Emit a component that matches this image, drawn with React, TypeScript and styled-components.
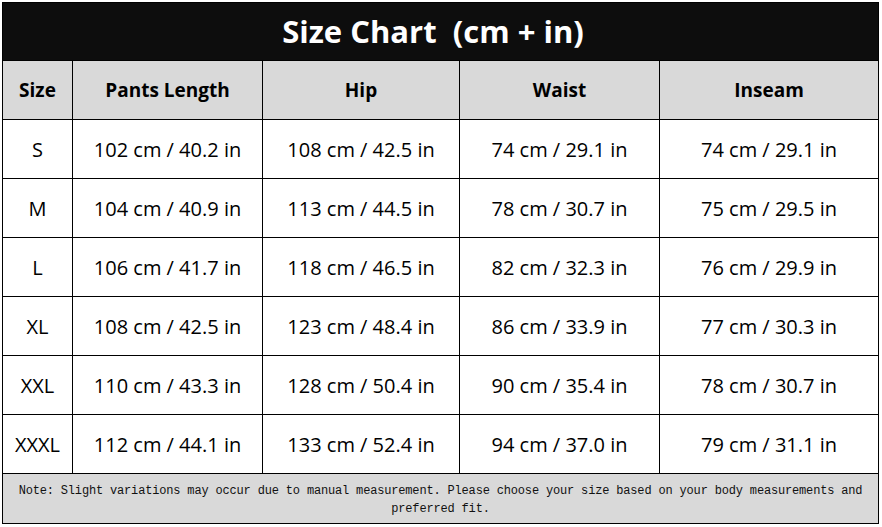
import React from "react";
import styled, { createGlobalStyle } from "styled-components";

const GlobalStyle = createGlobalStyle`
  html, body { margin: 0; padding: 0; background: #ffffff; }
  body { padding: 2px 0 0 2px; }
`;

const Grid = styled.div`
  display: grid;
  grid-template-columns: 69px 189px 196px 199px 218px;
  grid-template-rows: 57px 58px repeat(6, 58px) 49px;
  gap: 1px;
  padding: 1px;
  background: #000000;
  width: max-content;
  font-family: "Open Sans", "Noto Sans", sans-serif;
`;

const Title = styled.div`
  grid-column: 1 / -1;
  background: #0d0d0d;
  color: #ffffff;
  font-size: 31px;
  font-weight: 700;
  white-space: pre;
  display: flex;
  align-items: center;
  justify-content: center;
  padding: 0 15px 1px 0;
`;

const HeadCell = styled.div`
  background: #d9d9d9;
  color: #000000;
  font-size: 19px;
  font-weight: 700;
  display: flex;
  align-items: center;
  justify-content: center;
`;

const Cell = styled.div`
  background: #ffffff;
  color: #000000;
  font-size: 20px;
  font-weight: 400;
  display: flex;
  align-items: center;
  justify-content: center;
`;

const Note = styled.div`
  grid-column: 1 / -1;
  background: #d9d9d9;
  color: #111111;
  font-family: "Liberation Mono", "DejaVu Sans Mono", monospace;
  font-size: 12px;
  letter-spacing: -0.17px;
  line-height: 18px;
  text-align: center;
  padding: 8px 4px 0;
`;

const headers = ["Size", "Pants Length", "Hip", "Waist", "Inseam"];
const rows: string[][] = [
  ["S", "102 cm / 40.2 in", "108 cm / 42.5 in", "74 cm / 29.1 in", "74 cm / 29.1 in"],
  ["M", "104 cm / 40.9 in", "113 cm / 44.5 in", "78 cm / 30.7 in", "75 cm / 29.5 in"],
  ["L", "106 cm / 41.7 in", "118 cm / 46.5 in", "82 cm / 32.3 in", "76 cm / 29.9 in"],
  ["XL", "108 cm / 42.5 in", "123 cm / 48.4 in", "86 cm / 33.9 in", "77 cm / 30.3 in"],
  ["XXL", "110 cm / 43.3 in", "128 cm / 50.4 in", "90 cm / 35.4 in", "78 cm / 30.7 in"],
  ["XXXL", "112 cm / 44.1 in", "133 cm / 52.4 in", "94 cm / 37.0 in", "79 cm / 31.1 in"],
];

export default function App() {
  return (
    <>
      <GlobalStyle />
      <Grid>
        <Title>{"Size Chart  (cm + in)"}</Title>
        {headers.map((h) => (
          <HeadCell key={h}>{h}</HeadCell>
        ))}
        {rows.map((r) =>
          r.map((c, i) => <Cell key={r[0] + i}>{c}</Cell>)
        )}
        <Note>
          Note: Slight variations may occur due to manual measurement. Please choose your size based on your body measurements and preferred fit.
        </Note>
      </Grid>
    </>
  );
}
